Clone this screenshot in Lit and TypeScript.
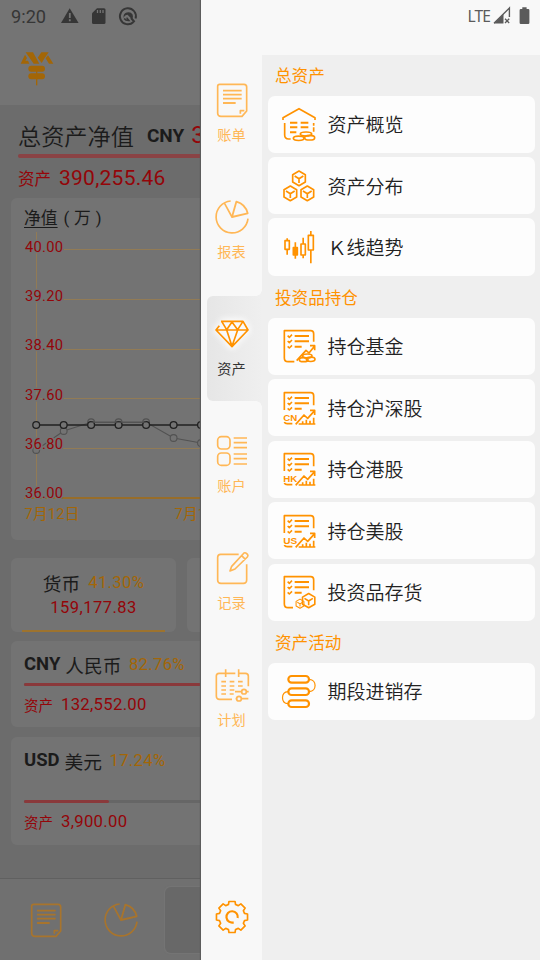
import { LitElement, html, css, svg, nothing } from "lit";
import { customElement, property } from "lit/decorators.js";

const gearPath = (() => {
  const pts: string[] = [];
  for (let i = 0; i < 8; i++) {
    const a = i * 45 - 90;
    for (const [d, r] of [[-16, 39], [-11, 47.5], [11, 47.5], [16, 39]]) {
      const t = ((a + d) * Math.PI) / 180;
      pts.push(`${(51 + r * Math.cos(t)).toFixed(1)} ${(51 + r * Math.sin(t)).toFixed(1)}`);
    }
  }
  return "M" + pts.join("L") + "Z";
})();

const checks = svg`<path d="M17 20l5 5 8-8M17 36l5 5 8-8M17 52l5 5 8-8" stroke-width="4.6"/>
  <path d="M38 21H81M38 37H81M38 53H59" stroke-width="5.8"/>`;

const stockDoc = (code: string) => svg`
  <path d="M7 57V5H86Q95 5 95 14V43"/>${checks}
  <text x="4" y="89" textLength="42" lengthAdjust="spacingAndGlyphs">${code}</text>
  <path d="M7 93Q9 98 16 98H31"/>
  <path d="M41 100L66 72L77 82L98 59M84 58H98V72M50 99H100M62 99V91M73 99V86M84 99V89M95 99V80"/>`;

const cube = (x: number, y: number, s = 1) => svg`<g transform="translate(${x} ${y}) scale(${s})">
  <path d="M0-22L19-11V11L0 22L-19 11V-11ZM-13-7L0 1L13-7M0 1V14"/></g>`;

const ICONS: Record<string, unknown> = {
  bill: svg`<path d="M14 4H87Q95 4 95 12V84L81 100H18Q8 100 8 90V10Q8 4 14 4Z"/>
    <path d="M24 23H80M24 35H80M24 47H80M24 60H62" stroke-width="5.5"/><path d="M76 92V83H88"/>`,
  pie: svg`<path d="M47 3A48 48 0 1 0 99 56M29 11L51 51"/>
    <path d="M51 51L64 5A48 48 0 0 1 98 40Z" stroke-width="5.5"/>`,
  diamond: svg`<path d="M18 13H84L99 39L51 89L3 39L13 26M3 39H99M20 13L35 38L51 15L68 38L84 13M35 39L51 88L68 39"/>`,
  account: svg`<rect x="8" y="8" width="37" height="37" rx="11"/><rect x="8" y="57" width="37" height="37" rx="11"/>
    <path d="M56 12H96M56 26H96M56 41H96M56 60H96M56 74H96M56 90H96" stroke-width="5.2"/>`,
  edit: svg`<path d="M71 10H17Q8 10 8 19V87Q8 97 18 97H85Q95 97 95 87V40"/>
    <path d="M45 60L50 46L87 6Q91 4 95 8L98 11Q100 14 97 18L60 54ZM80 14L91 25"/>`,
  plan: svg`<path d="M20 16H12Q4 16 4 24V84Q4 94 14 94H51M20 16H61M71 16H91Q100 16 100 24V55M32 4V27M71 4V27"/>
    <path d="M19 41H33M44 41H58M69 41H83M19 54H33M44 54H58M69 54H83M19 66H33M44 66H58M19 78H33M44 78H56"/>
    <path d="M60 71H79M95 71H101M62 92H65M80 92H100"/><circle cx="87" cy="71" r="7"/><circle cx="72" cy="92" r="7"/>`,
  gear: svg`<path d=${gearPath}/><path d="M56 67A17 17 0 1 1 68 54" stroke-width="6.5"/>`,
  house: svg`<path d="M3 39V32L51 5L99 32V39M8 48V84Q8 96 20 96H26M95 48V56M95 61V74"/>
    <path d="M24 47H46M56 47H79M24 61H46M56 61H79M24 76H43" stroke-width="5.8"/>
    <ellipse cx="72" cy="81" rx="17" ry="6"/><ellipse cx="50" cy="94" rx="16" ry="6.5"/>
    <ellipse cx="83" cy="92" rx="15" ry="7"/>`,
  cubes: svg`${cube(51, 28)}${cube(25, 73)}${cube(76, 73)}`,
  candles: svg`<path d="M9 32H22V58H9ZM15.5 25V32M15.5 58V74M57 42H70V75H57ZM63.5 23V42M63.5 75V85M79 16H94V60H79ZM86.5 3V16M86.5 60V100M40 37V86"/>
    <path d="M34 53H46V75H34Z" fill="currentColor"/>`,
  fund: svg`<path d="M37 98H18Q7 98 7 87V5H86Q95 5 95 14V38"/>${checks}
    <path d="M44 95L72 64L81 72L98 51M84 50H98V64"/>
    <ellipse cx="76" cy="81" rx="14" ry="6"/><ellipse cx="65" cy="92" rx="13" ry="6"/><ellipse cx="86" cy="91" rx="13" ry="6.5"/>`,
  cn: stockDoc("CN"),
  hk: stockDoc("HK"),
  us: stockDoc("US"),
  goods: svg`<path d="M33 98H18Q7 98 7 87V5H86Q95 5 95 14V46"/>${checks}${cube(80, 77, 0.97)}${cube(54, 86, 0.62)}`,
  chain: svg`<g stroke-width="6.5"><rect x="19" y="6" width="62" height="20" rx="10"/><rect x="19" y="43" width="62" height="20" rx="10"/>
    <rect x="19" y="79" width="62" height="20" rx="10"/></g>
    <path d="M82 16C105 18 105 51 82 53M18 53C-4 55 -4 87 18 89" stroke-width="3.6"/>`,
};

@customElement("line-icon")
class LineIcon extends LitElement {
  static styles = css`
    :host { display: block; width: 34px; height: 34px; flex: none; }
    svg { display: block; width: 100%; height: 100%; overflow: visible; fill: none; stroke: currentColor; stroke-width: 5; stroke-linejoin: round; }
    text { font: 700 27px "Liberation Sans", sans-serif; fill: currentColor; stroke: none; }
  `;
  @property() name = "";
  render() {
    return html`<svg viewBox="0 0 102 102">${ICONS[this.name] ?? nothing}</svg>`;
  }
}

@customElement("trend-chart")
class TrendChart extends LitElement {
  static styles = css`
    :host { display: block; }
    svg { display: block; overflow: hidden; }
    .grid { stroke: #927b55; stroke-width: 1; }
    .base { stroke: #a36b12; stroke-width: 1.3; }
    .tick { font: 14.7px Roboto, sans-serif; fill: #940509; letter-spacing: 0.25px; stroke: #737373; stroke-width: 3px; paint-order: stroke; }
    .date { font: 14.7px Roboto, "Noto Sans CJK SC", sans-serif; fill: #a36606; letter-spacing: 0.2px; }
    .dark { fill: none; stroke: #202020; stroke-width: 1.3; }
    .light { fill: none; stroke: #525252; stroke-width: 1.1; }
    .dot { fill: #737373; }
  `;
  render() {
    const xs = [36.2, 63.7, 91.1, 118.6, 146.1, 173.6, 201];
    const light = [450, 431, 422.3, 422.3, 422.3, 438, 443];
    const ticks = ["40.00", "39.20", "38.40", "37.60", "36.80", "36.00"];
    const line = (ys: number[]) => xs.map((x, i) => `${x},${ys[i]}`).join(" ");
    return html`<svg width="190" height="308" viewBox="11 232 190 308">
      <path class="grid" d="M36.5 232V498" />
      ${ticks.map((_, i) => svg`<path class=${i === 5 ? "base" : "grid"} d="M${i === 5 ? 24 : 36} ${[249.5, 299.5, 349.5, 398.5, 448.5, 498][i]}H201"/>`)}
      <polyline class="light" points=${line(light)} />
      ${xs.map((x, i) => svg`<circle class="light dot" cx=${x} cy=${light[i]} r="3.4"/>`)}
      ${ticks.map((t, i) => svg`<text class="tick" x="25" y=${252 + i * 49.2}>${t}</text>`)}
      <polyline class="dark" points=${line(xs.map(() => 425))} />
      ${xs.map((x) => svg`<circle class="dark dot" cx=${x} cy="425" r="3.4"/>`)}
      <polyline class="light" points="91,422.3 146,422.3" />
      <text class="date" x="24.5" y="519">7月12日</text>
      <text class="date" x="174.5" y="519">7月1</text>
    </svg>`;
  }
}

const RAIL = [
  ["bill", "账单"], ["pie", "报表"], ["diamond", "资产"],
  ["account", "账户"], ["edit", "记录"], ["plan", "计划"],
];

const SECTIONS: { title: string; items: [string, string][] }[] = [
  { title: "总资产", items: [["house", "资产概览"], ["cubes", "资产分布"], ["candles", "Ｋ线趋势"]] },
  { title: "投资品持仓", items: [["fund", "持仓基金"], ["cn", "持仓沪深股"], ["hk", "持仓港股"], ["us", "持仓美股"], ["goods", "投资品存货"]] },
  { title: "资产活动", items: [["chain", "期段进销存"]] },
];

@customElement("app-root")
class AppRoot extends LitElement {
  static styles = css`
    :host { display: flex; width: 540px; height: 960px; overflow: hidden; font-family: Roboto, "Noto Sans CJK SC", sans-serif; background: #6c6c6c; }
    * { box-sizing: border-box; }
    .page { width: 201px; height: 960px; overflow: hidden; flex: none; display: flex; flex-direction: column; background: #6c6c6c; color: #1b1b1b; white-space: nowrap; }
    .head { height: 105px; background: #747474; flex: none; }
    .status { height: 32px; display: flex; align-items: center; padding-left: 11px; font-size: 18.2px; color: #363636; }
    .status svg { display: block; }
    .time { width: 48px; line-height: 32px; padding-top: 1px; }
    .logo { display: block; margin: 19px 0 0 20px; }
    .sum { height: 49px; display: flex; align-items: center; padding: 11px 0 0 18px; font-size: 23.2px; font-weight: 350; }
    .code { font-size: 19px; font-weight: 700; margin: 0 7px 0 13px; }
    .sum .num { font-size: 24px; font-weight: 400; }
    .bar { height: 4px; margin-left: 18px; background: #8a4345; border-radius: 2px 0 0 2px; }
    .num { color: #940509; }
    .row { display: flex; align-items: center; color: #940509; }
    .total { height: 40px; padding: 0 0 0 18px; font-size: 16.5px; }
    .total .num { font-size: 21px; letter-spacing: 0.25px; margin-left: 8px; }
    .card { margin-left: 11px; background: #737373; border-radius: 6px 0 0 6px; flex: none; }
    .chart { height: 342px; }
    .caption { height: 34px; padding: 6px 0 0 13px; font-size: 16.8px; line-height: 28px; display: flex; }
    .caption u { text-decoration-thickness: 1px; text-underline-offset: 3px; }
    .paren { margin-left: 6px; letter-spacing: 4.8px; }
    .tiles { display: flex; gap: 11px; margin: 18px 0 9px 11px; height: 74px; flex: none; }
    .tile { width: 165px; flex: none; background: #737373; border-radius: 6px; display: flex; flex-direction: column; align-items: center; }
    .kind { display: flex; align-items: center; height: 26px; margin-top: 11px; font-size: 18.7px; gap: 8px; }
    .pct { color: #a36606; font-size: 16.7px; letter-spacing: 0.3px; font-weight: 400; }
    .tile .num { font-size: 16.5px; letter-spacing: 0.45px; line-height: 26px; height: 35px; }
    .under { width: 143px; height: 2.5px; background: #9d732e; }
    .cur { padding-left: 13px; }
    .cny { height: 86px; margin-bottom: 10px; }
    .usd { height: 108px; }
    .name { display: flex; align-items: center; height: 42px; padding-top: 4px; font-size: 18.7px; }
    .name b { margin-right: 5px; font-size: 18.5px; }
    .name .pct { margin-left: 7.5px; padding-top: 1px; }
    .track { height: 3px; background: #666; }
    .usd .track { margin-top: 21px; }
    .fill { height: 3px; background: #8a393b; border-radius: 2px; }
    .cur .row { height: 36px; font-size: 14.5px; }
    .cur .row .num { font-size: 16.7px; letter-spacing: 0.3px; margin-left: 8px; }
    .tabs { margin-top: auto; height: 82px; border-top: 1px solid #606060; background: #707070; display: flex; align-items: center; color: #a8742c; padding-left: 29px; flex: none; }
    .tabs line-icon + line-icon { margin-left: 41px; }
    .on { width: 90px; height: 66px; margin-left: 27px; flex: none; background: #686868; border-radius: 6px; box-shadow: 0 0 1px 1px #757575; }

    .drawer { width: 339px; flex: none; background: #f8f8f8; display: flex; flex-direction: column; box-shadow: -1px 0 1px #5c5c5c; z-index: 1; }
    .sys { height: 55px; flex: none; display: flex; align-items: flex-start; justify-content: flex-end; padding: 6px 9px 0 0; color: #5b5b5b; }
    .lte { font: 15.6px "Noto Sans", sans-serif; line-height: 20px; letter-spacing: -0.9px; margin-right: 3px; }
    .main { flex: 1; display: flex; }
    .rail { width: 61px; display: flex; flex-direction: column; align-items: flex-end; padding-top: 7px; }
    .item { position: relative; width: 55px; height: 105px; margin-bottom: 12px; flex: none; display: flex; flex-direction: column; align-items: center; padding: 21.4px 6px 0 0; font-size: 14.2px; color: #ffb756; border-radius: 6px 0 0 6px; }
    .item span { line-height: 22px; margin-top: 7px; }
    .item.active { background: linear-gradient(90deg, #e6e6e6, #efefef); color: #ff9200; }
    .item.active span { color: #333; }
    .item.active line-icon { filter: drop-shadow(0 0 3px #fff) drop-shadow(0 0 3px #fff); }
    .item.active::before, .item.active::after { content: ""; position: absolute; right: 0; width: 6px; height: 6px; }
    .item.active::before { top: -6px; background: radial-gradient(circle at 0 0, #f8f8f8 5.5px, #efefef 6px); }
    .item.active::after { bottom: -6px; background: radial-gradient(circle at 0 100%, #f8f8f8 5.5px, #efefef 6px); }
    .gear { color: #ff9200; margin: auto 13px 26px 0; }
    .list { width: 278px; background: #efefef; padding: 0 5px 0 6px; }
    .title { height: 42px; padding-left: 7px; line-height: 46px; font-size: 16.6px; color: #ff9200; }
    .title.first { height: 40.5px; line-height: 43px; }
    .entries { display: flex; flex-direction: column; gap: 4.4px; }
    .entry { height: 57.1px; border-radius: 7px; background: #fdfdfd; display: flex; align-items: center; padding-left: 14.3px; gap: 11.2px; color: #ff9200; }
    .entry span { color: #222; font-size: 19px; font-weight: 350; font-family: "Noto Sans CJK SC", sans-serif; line-height: 28px; }
  `;

  render() {
    return html`
      <div class="page">
        <div class="head">
          <div class="status">
            <span class="time">9:20</span>
            <svg width="84" height="20" viewBox="59 6 84 20">
              <path d="M69.7 8.2L78.6 23H61Z" fill="#363636" />
              <path d="M69.8 13V18M69.8 19.3V21.3" stroke="#747474" stroke-width="1.8" />
              <path d="M97 8.2H104Q105.5 8.2 105.5 9.7V22.5Q105.5 24 104 24H93.5Q92 24 92 22.5V13.2Z" fill="#363636" />
              <path d="M97.5 10V13M100.3 10V13M103 10V13" stroke="#747474" stroke-width="1.3" />
              <path d="M133.5 22A8 8 0 1 1 135.6 18.5" fill="none" stroke="#363636" stroke-width="1.9" />
              <path d="M123.6 18A4.9 4.9 0 0 1 132.6 14.6Q133.6 17.2 132 19.2L127.5 14.8Q125 14.8 123.6 18Z" fill="#363636" />
              <path d="M124.2 18.5Q125.6 20.8 129 20.6L126.6 17.6" fill="none" stroke="#363636" stroke-width="1.5" />
              <path d="M131 18L134.6 22" stroke="#363636" stroke-width="2" />
            </svg>
          </div>
          <svg class="logo" width="34" height="35" viewBox="60 152 102 105" fill="#a36606">
            <path d="M77 156H99L118 190H101ZM75 163L81 173L76 181H84L88 190H62ZM124 156H146L134 173L125 188L113 172ZM144 165L160 190H147L137 174Z" />
            <rect x="85" y="196" width="50" height="18" rx="9" />
            <rect x="85" y="219" width="50" height="18" rx="9" />
            <rect x="108" y="212" width="4" height="43" />
          </svg>
        </div>
        <div class="sum">总资产净值<span class="code">CNY</span><span class="num">3</span></div>
        <div class="bar"></div>
        <div class="row total">资产<span class="num">390,255.46</span></div>
        <div class="card chart">
          <div class="caption"><u>净值</u><span class="paren">(万)</span></div>
          <trend-chart></trend-chart>
        </div>
        <div class="tiles">
          <div class="tile">
            <div class="kind">货币<span class="pct">41.30%</span></div>
            <span class="num">159,177.83</span>
            <div class="under"></div>
          </div>
          <div class="tile"></div>
        </div>
        <div class="card cur cny">
          <div class="name"><b>CNY</b>人民币<span class="pct">82.76%</span></div>
          <div class="track"><div class="fill"></div></div>
          <div class="row">资产<span class="num">132,552.00</span></div>
        </div>
        <div class="card cur usd">
          <div class="name"><b>USD</b>美元<span class="pct">17.24%</span></div>
          <div class="track"><div class="fill" style="width:85px"></div></div>
          <div class="row">资产<span class="num">3,900.00</span></div>
        </div>
        <div class="tabs">
          <line-icon name="bill"></line-icon>
          <line-icon name="pie"></line-icon>
          <div class="on"></div>
        </div>
      </div>
      <div class="drawer">
        <div class="sys">
          <span class="lte">LTE</span>
          <svg width="38" height="20" viewBox="493 6 38 20">
            <path d="M494 23.3L509.4 8V17" fill="none" stroke="#5b5b5b" stroke-width="1.4" />
            <path d="M494 23.5L503.5 14V23.5Z" fill="#5b5b5b" />
            <path d="M505 18.8L509.2 23M509.2 18.8L505 23" stroke="#5b5b5b" stroke-width="1.3" />
            <path d="M522.3 7.3H526.6V9H528.2Q529.4 9 529.4 10.2V22.8Q529.4 24 528.2 24H520.8Q519.6 24 519.6 22.8V10.2Q519.6 9 520.8 9H522.3Z" fill="#5b5b5b" />
          </svg>
        </div>
        <div class="main">
          <div class="rail">
            ${RAIL.map(([icon, label]) => html`<div class="item ${icon === "diamond" ? "active" : ""}">
              <line-icon name=${icon}></line-icon><span>${label}</span>
            </div>`)}
            <line-icon class="gear" name="gear"></line-icon>
          </div>
          <div class="list">
            ${SECTIONS.map((s, i) => html`<div class="title ${i ? "" : "first"}">${s.title}</div>
              <div class="entries">
                ${s.items.map(([icon, label]) => html`<div class="entry"><line-icon name=${icon}></line-icon><span>${label}</span></div>`)}
              </div>`)}
          </div>
        </div>
      </div>`;
  }
}
